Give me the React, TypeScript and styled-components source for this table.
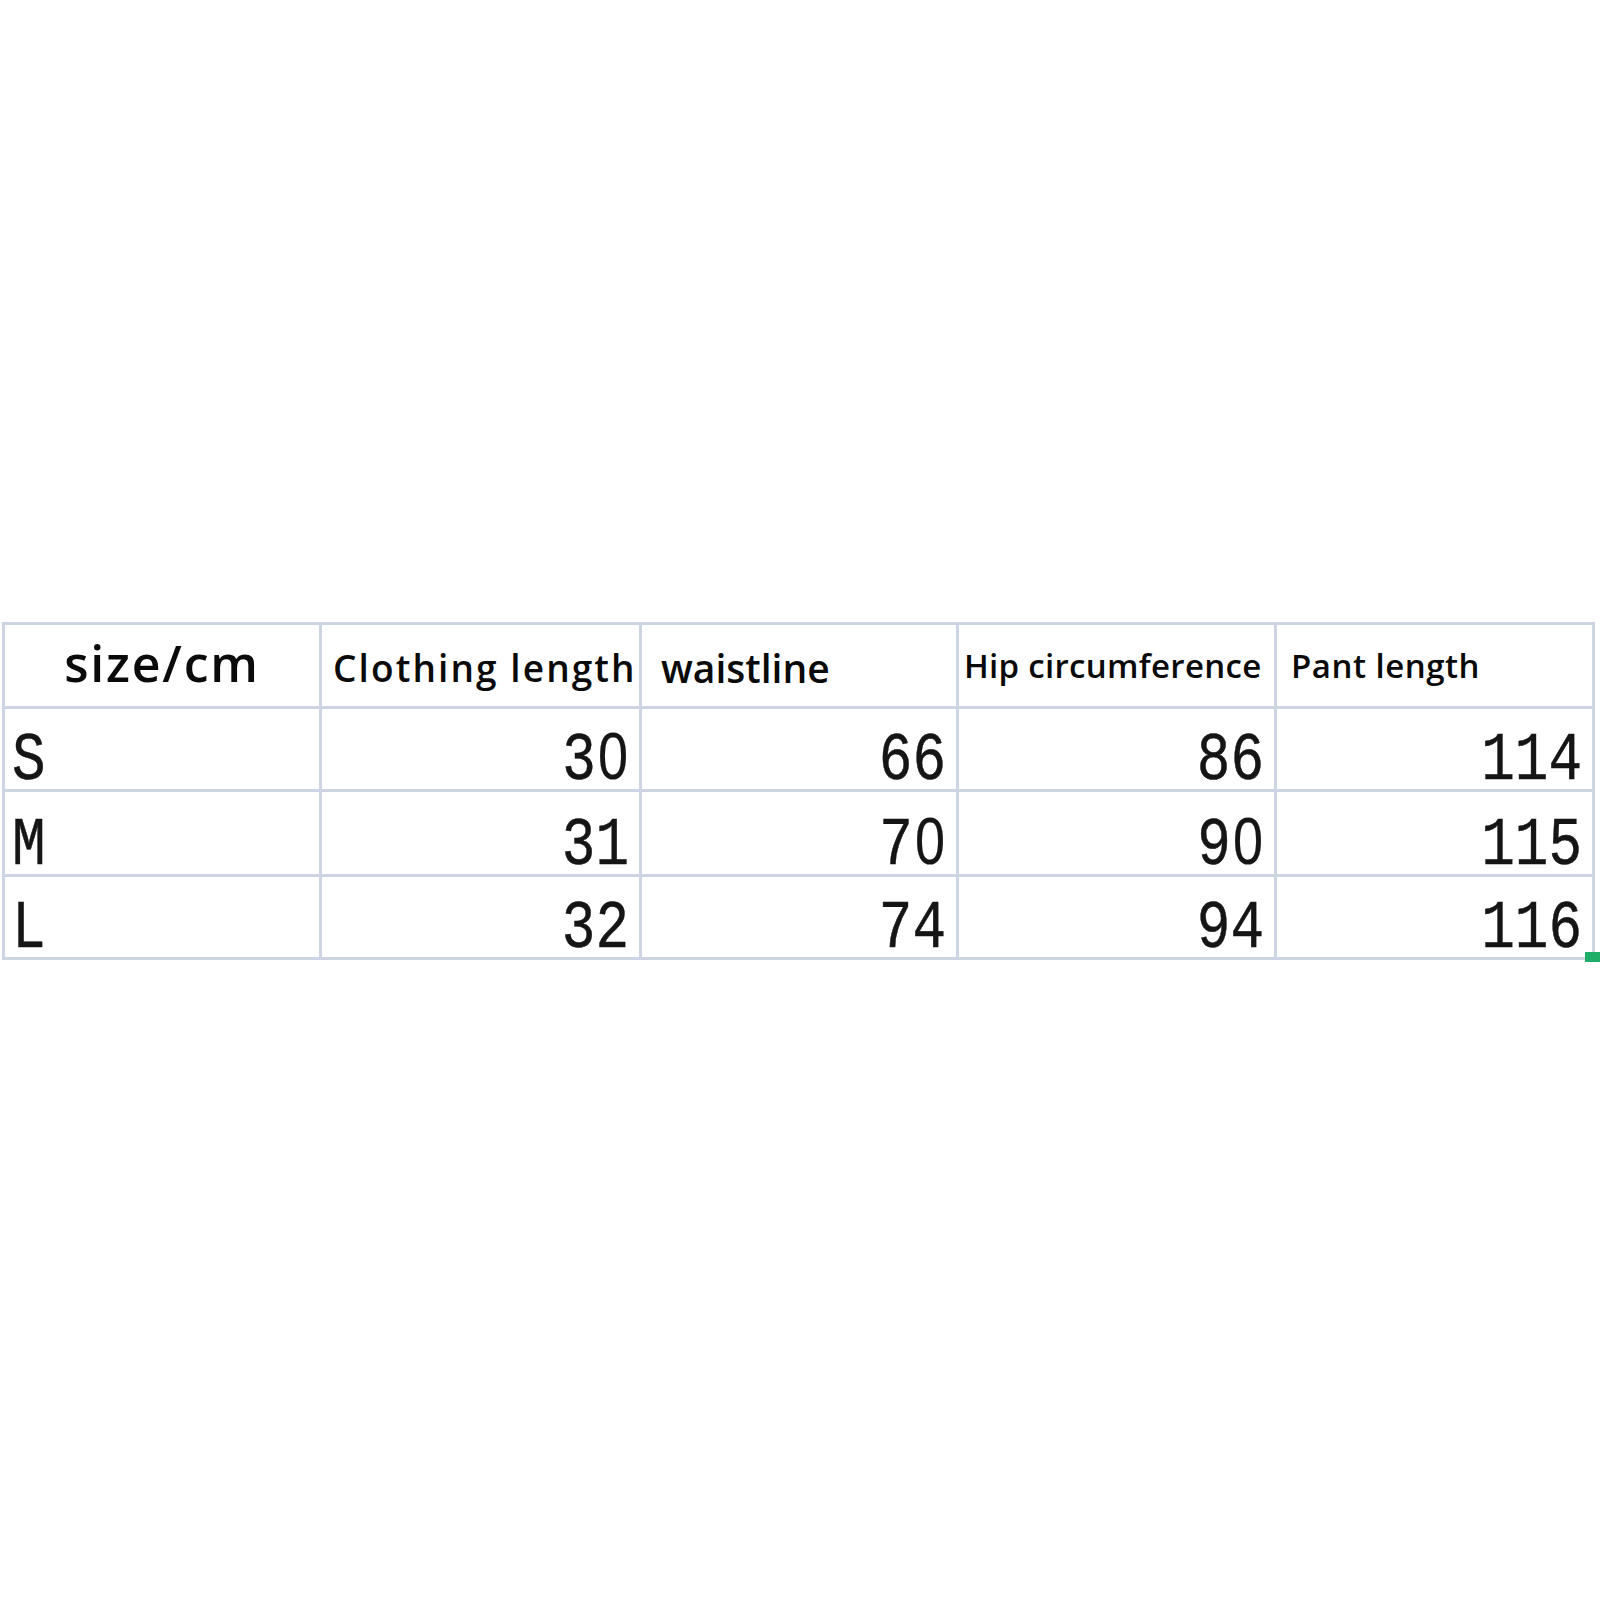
import styled, { createGlobalStyle } from 'styled-components';

const GlobalStyle = createGlobalStyle`
  html, body {
    margin: 0;
    padding: 0;
    background: #ffffff;
  }
  body {
    width: 1600px;
    height: 1600px;
    font-family: "Open Sans", "Noto Sans", sans-serif;
    color: #000;
  }
`;

type Heading = {
  label: string
  size: number
  spacing: number
  pb: number
  pl: number
  center?: boolean
}

const headings: Heading[] = [
  { label: 'size/cm', size: 50, spacing: 1.8, pb: 18, pl: 0, center: true },
  { label: 'Clothing length', size: 37, spacing: 2.1, pb: 20, pl: 11 },
  { label: 'waistline', size: 39, spacing: 0, pb: 19, pl: 19 },
  { label: 'Hip circumference', size: 33, spacing: 0.3, pb: 24, pl: 5 },
  { label: 'Pant length', size: 33, spacing: 0.5, pb: 24, pl: 14 },
];

const rows = [
  { size: 'S', values: ['30', '66', '86', '114'] },
  { size: 'M', values: ['31', '70', '90', '115'] },
  { size: 'L', values: ['32', '74', '94', '116'] },
];

// the mono face has a dotted zero, the sheet shows a plain one
const Value = ({ text }: { text: string }) => (
  <Glyph>
    {text.split('').map((c, i) => c === '0' ? <Zero key={i}>0</Zero> : <span key={i}>{c}</span>)}
  </Glyph>
)

const App = () => {
  return (
    <Page>
      <GlobalStyle />
      <Sheet>
        {headings.map((h) => (
          <HeadCell key={h.label} pb={h.pb} pl={h.pl} center={h.center}>
            <HeadText size={h.size} spacing={h.spacing}>{h.label}</HeadText>
          </HeadCell>
        ))}
        {rows.map((row) => (
          <Row key={row.size}>
            <DataCell align='left'>
              <Value text={row.size} />
            </DataCell>
            {row.values.map((v, i) => (
              <DataCell key={i} align='right'>
                <Value text={v} />
              </DataCell>
            ))}
          </Row>
        ))}
        <FillHandle />
      </Sheet>
    </Page>
  )
}

const Page = styled.div`
  padding: 622px 0 0 2px;
`;

const Sheet = styled.div`
  position: relative;
  display: grid;
  grid-template-columns: 317px 320px 317px 318px 318px;
  grid-template-rows: 84px 83px 85px 83px;
  width: max-content;
  border-top: 3px solid #cdd4e4;
  border-left: 3px solid #cdd4e4;
`;

const Row = styled.div`
  display: contents;
`;

const Cell = styled.div`
  display: flex;
  box-sizing: border-box;
  border-right: 3px solid #cdd4e4;
  border-bottom: 3px solid #cdd4e4;
  white-space: nowrap;
`;

const HeadCell = styled(Cell)<{ pb: number, pl: number, center?: boolean }>`
  align-items: flex-end;
  justify-content: ${props => props.center ? 'center' : 'flex-start'};
  padding-bottom: ${props => props.pb}px;
  padding-left: ${props => props.pl}px;
  overflow: hidden;
`;

const HeadText = styled.span<{ size: number, spacing: number }>`
  font-family: "Open Sans", "Noto Sans", sans-serif;
  font-weight: 600;
  font-size: ${props => props.size}px;
  letter-spacing: ${props => props.spacing}px;
  line-height: 1;
  color: #0a0a0a;
`;

const DataCell = styled(Cell)<{ align: 'left' | 'right' }>`
  align-items: flex-end;
  justify-content: ${props => props.align === 'left' ? 'flex-start' : 'flex-end'};
  padding: 0 ${props => props.align === 'left' ? '0' : '10px'} 2px ${props => props.align === 'left' ? '7px' : '0'};
`;

const Glyph = styled.span`
  display: inline-block;
  font-family: "Liberation Mono", "DejaVu Sans Mono", monospace;
  font-size: 56px;
  line-height: 0.8;
  color: #151515;
  -webkit-text-stroke: 0.4px #151515;
  transform: scaleY(1.22);
  transform-origin: 50% 83%;
`;

const Zero = styled.span`
  font-family: "Liberation Sans", Arial, sans-serif;
  font-size: 54px;
  margin: 0 1px 0 2px;
  -webkit-text-stroke: 0.2px #151515;
`;

const FillHandle = styled.div`
  position: absolute;
  right: -5px;
  bottom: -2px;
  width: 15px;
  height: 10px;
  background: #1fae68;
`;

export default App
